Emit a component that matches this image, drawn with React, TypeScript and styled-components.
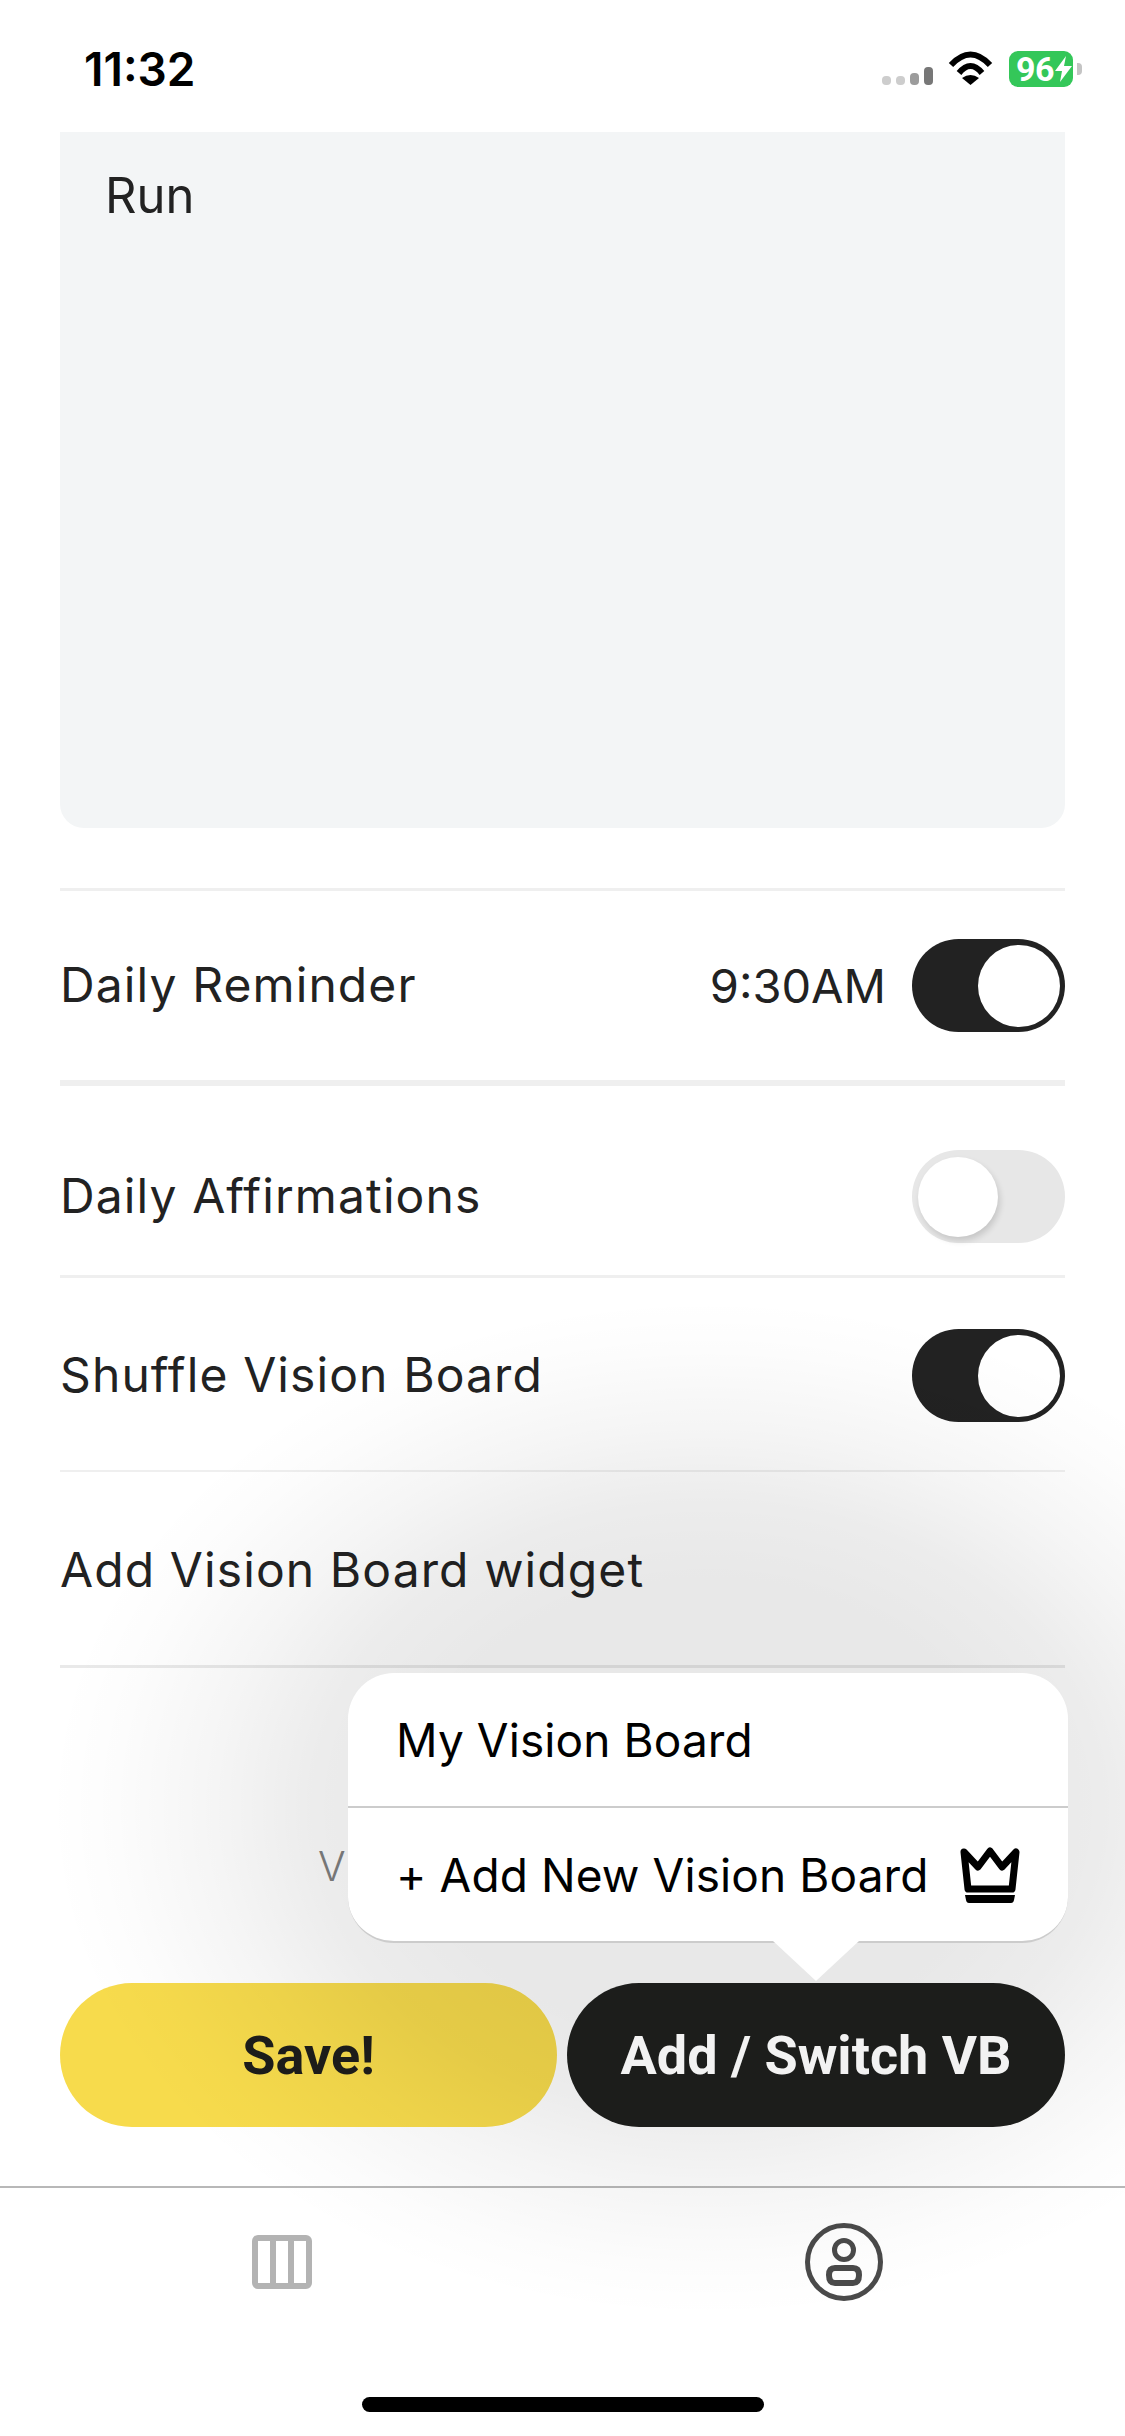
import React from 'react'

import styled, { createGlobalStyle } from 'styled-components'

const GlobalStyle = createGlobalStyle`
  html, body {
    margin: 0;
    padding: 0;
    background: #fff;
    font-family: Inter, "Noto Sans", sans-serif;
  }
`

const Page = styled.div`
  width: 1125px;
  height: 2436px;
  display: flex;
  flex-direction: column;
  overflow: hidden;
  background: #fff;
  color: #222;
`

const StatusBar = styled.header`
  height: 132px;
  box-sizing: border-box;
  padding: 6px 43px 0 84px;
  display: flex;
  align-items: center;
  justify-content: space-between;
  flex-shrink: 0;
`

const Time = styled.span`
  font-size: 46px;
  font-weight: 600;
  color: #000;
`

const StatusIcons = styled.div`
  display: flex;
  align-items: center;
`

const Battery = styled.div`
  width: 64px;
  height: 36px;
  margin-left: 16px;
  box-sizing: border-box;
  padding-left: 7px;
  border-radius: 9px;
  background: #34c759;
  color: #fff;
  display: flex;
  align-items: center;
  font-family: Roboto, sans-serif;
  font-size: 34px;
  font-weight: 700;
  letter-spacing: -0.5px;
`

const BatteryNub = styled.div`
  width: 5px;
  height: 12px;
  margin-left: 4px;
  border-radius: 0 4px 4px 0;
  background: #c4c4c4;
`

const Content = styled.main`
  padding: 0 60px;
  flex: 1;
  display: flex;
  flex-direction: column;
`

const NoteBox = styled.div`
  height: 696px;
  box-sizing: border-box;
  padding: 34px 45px;
  border-radius: 0 0 24px 24px;
  background: #f3f5f6;
  font-size: 49px;
  line-height: 60px;
  color: #222;
  margin-bottom: 60px;
`

const Row = styled.div<{ $top: number; $bottom: number; $rule: number }>`
  display: flex;
  align-items: center;
  justify-content: space-between;
  padding: ${(props) => props.$top}px 0 ${(props) => props.$bottom}px;
  border-top: ${(props) => props.$rule}px solid #efefef;
`

const RowEnd = styled.div`
  border-top: 3px solid #e9e9e9;
`

const Label = styled.span`
  font-size: 48px;
  line-height: 91px;
  padding-bottom: 2px;
  letter-spacing: 1.1px;
  color: #222;
`

const RowValue = styled.div`
  display: flex;
  align-items: center;
  gap: 26px;
`

const TimeValue = styled.span`
  font-size: 47px;
  letter-spacing: 0;
  color: #222;
`

const Track = styled.div<{ $on: boolean }>`
  width: 153px;
  height: 93px;
  box-sizing: border-box;
  padding: 0 ${(props) => (props.$on ? 5 : 0)}px 0 ${(props) => (props.$on ? 0 : 6)}px;
  border-radius: 47px;
  display: flex;
  align-items: center;
  justify-content: ${(props) => (props.$on ? 'flex-end' : 'flex-start')};
  background: ${(props) => (props.$on ? '#222' : '#e7e7e7')};
`

const Knob = styled.div<{ $on: boolean }>`
  width: ${(props) => (props.$on ? 82 : 80)}px;
  height: ${(props) => (props.$on ? 82 : 80)}px;
  border-radius: 50%;
  background: #fff;
  box-shadow: ${(props) => (props.$on ? 'none' : '2px 4px 6px rgba(0, 0, 0, 0.14)')};
`

const Version = styled.div`
  height: 315px;
  box-sizing: border-box;
  padding: 173px 0 0 258px;
  font-size: 41px;
  line-height: 50px;
  font-weight: 300;
  color: #808080;
`

const Actions = styled.div`
  position: relative;
  display: grid;
  grid-template-columns: 497px 498px;
  gap: 10px;
`

const ActionButton = styled.button<{ $dark?: boolean }>`
  position: relative;
  z-index: ${(props) => (props.$dark ? 3 : 0)};
  height: 144px;
  border: 0;
  padding: 0;
  border-radius: 72px;
  font-family: Roboto, sans-serif;
  font-size: 54px;
  font-weight: 700;
  color: ${(props) => (props.$dark ? '#f2f2f2' : '#1d1d1b')};
  background: ${(props) => (props.$dark ? '#1c1d1b' : '#f7db4c')};
`

// soft dim that spreads out from the popover, over the page and the Save button
const PopoverShade = styled.div`
  position: absolute;
  z-index: 1;
  left: -12px;
  top: -685px;
  width: 1320px;
  height: 1020px;
  pointer-events: none;
  background: radial-gradient(
    closest-side,
    rgba(0, 0, 0, 0.09) 0%,
    rgba(0, 0, 0, 0.09) 45%,
    rgba(0, 0, 0, 0.075) 60%,
    rgba(0, 0, 0, 0.04) 75%,
    rgba(0, 0, 0, 0.012) 90%,
    rgba(0, 0, 0, 0) 100%
  );
`

const Popover = styled.div`
  position: absolute;
  z-index: 2;
  right: -3px;
  bottom: calc(100% + 40px);
  width: 720px;
  border-radius: 46px;
  border-bottom: 2px solid #ccc;
  background: #fff;
  color: #000;

  &::after {
    content: '';
    position: absolute;
    top: 100%;
    left: 425px;
    border-style: solid;
    border-width: 40px 43px 0;
    border-color: #fff transparent transparent;
  }
`

const PopoverItem = styled.div<{ $first?: boolean }>`
  height: ${(props) => (props.$first ? 135 : 133)}px;
  box-sizing: border-box;
  padding: 0 48px;
  display: flex;
  align-items: center;
  justify-content: space-between;
  font-size: 46px;
  letter-spacing: 0.1px;
  border-bottom: ${(props) => (props.$first ? '2px solid #ccc' : '0')};
`

const TabBar = styled.nav`
  height: 250px;
  flex-shrink: 0;
  box-sizing: border-box;
  border-top: 2px solid #b8b8b8;
  margin-top: 59px;
  display: flex;
  flex-direction: column;
`

const TabIcons = styled.div`
  height: 209px;
  box-sizing: border-box;
  padding: 35px 242px 0 252px;
  display: flex;
  align-items: flex-start;
  justify-content: space-between;
`

const HomeIndicator = styled.div`
  width: 402px;
  height: 15px;
  margin: 0 auto;
  border-radius: 8px;
  background: #000;
`

const Wifi = () => (
  <svg width="45" height="36" viewBox="0 0 45 36" fill="none">
    <path d="M3 14Q22.5 -7 42 14" stroke="#000" strokeWidth="6" />
    <path d="M11 22Q22.5 8 34 22" stroke="#000" strokeWidth="6" />
    <path d="M22.5 34L14 27Q22.5 21 31 27Z" fill="#000" />
  </svg>
)

const Signal = () => (
  <svg width="51" height="36" viewBox="0 0 51 36" style={{ marginRight: 15 }}>
    <rect x="0" y="25" width="9" height="9" rx="4" fill="#cdcdcd" />
    <rect x="14" y="25" width="9" height="9" rx="4" fill="#cdcdcd" />
    <rect x="28" y="22" width="9" height="12" rx="4" fill="#9c9c9c" />
    <rect x="42" y="16" width="9" height="18" rx="4" fill="#777" />
  </svg>
)

const Bolt = () => (
  <svg width="17" height="26" viewBox="0 0 17 26" style={{ marginLeft: 1, flexShrink: 0 }}>
    <path d="M11 0L0 15H7L5 26L17 10H9Z" fill="#fff" />
  </svg>
)

const Crown = () => (
  <svg width="60" height="57" viewBox="0 0 60 57" fill="none">
    <path d="M4 6L18 21L30 5L42 21L56 6L52 43H8Z" stroke="#000" strokeWidth="7" strokeLinejoin="round" />
    <path d="M5 49H55L54 54Q53.500 57 51 57H9Q6.500 57 6 54Z" fill="#000" />
  </svg>
)

const BoardIcon = () => (
  <svg width="60" height="54" viewBox="0 0 60 54" fill="none" style={{ marginTop: 12 }}>
    <rect x="3" y="3" width="54" height="48" rx="3" stroke="#b3b3b3" strokeWidth="6" />
    <path d="M21 3V51M39 3V51" stroke="#b3b3b3" strokeWidth="6" />
  </svg>
)

const ProfileIcon = () => (
  <svg width="78" height="78" viewBox="0 0 78 78" fill="none">
    <circle cx="39" cy="39" r="36.500" stroke="#4a4a4a" strokeWidth="5" />
    <circle cx="39" cy="27" r="9.500" stroke="#4a4a4a" strokeWidth="5" />
    <path d="M30 45H48Q54 45 54 52Q54 60 48 60H30Q24 60 24 52Q24 45 30 45Z" stroke="#4a4a4a" strokeWidth="6" />
  </svg>
)

const Toggle = ({ on }: { on: boolean }): React.ReactElement => (
  <Track $on={on}>
    <Knob $on={on} />
  </Track>
)

const App = (): React.ReactElement => {
  return (
    <Page>
      <GlobalStyle />
      <StatusBar>
        <Time>11:32</Time>
        <StatusIcons>
          <Signal />
          <Wifi />
          <Battery>
            96
            <Bolt />
          </Battery>
          <BatteryNub />
        </StatusIcons>
      </StatusBar>

      <Content>
        <NoteBox>Run</NoteBox>

        <Row $rule={3} $top={48} $bottom={48}>
          <Label>Daily Reminder</Label>
          <RowValue>
            <TimeValue>9:30AM</TimeValue>
            <Toggle on />
          </RowValue>
        </Row>
        <Row $rule={6} $top={64} $bottom={32}>
          <Label>Daily Affirmations</Label>
          <Toggle on={false} />
        </Row>
        <Row $rule={3} $top={51} $bottom={48}>
          <Label>Shuffle Vision Board</Label>
          <Toggle on />
        </Row>
        <Row $rule={2} $top={52} $bottom={48}>
          <Label>Add Vision Board widget</Label>
        </Row>
        <RowEnd />

        <Version>V</Version>

        <Actions>
          <PopoverShade />
          <Popover>
            <PopoverItem $first>My Vision Board</PopoverItem>
            <PopoverItem>
              + Add New Vision Board
              <Crown />
            </PopoverItem>
          </Popover>
          <ActionButton>Save!</ActionButton>
          <ActionButton $dark>Add / Switch VB</ActionButton>
        </Actions>
      </Content>

      <TabBar>
        <TabIcons>
          <BoardIcon />
          <ProfileIcon />
        </TabIcons>
        <HomeIndicator />
      </TabBar>
    </Page>
  )
}

export default App
